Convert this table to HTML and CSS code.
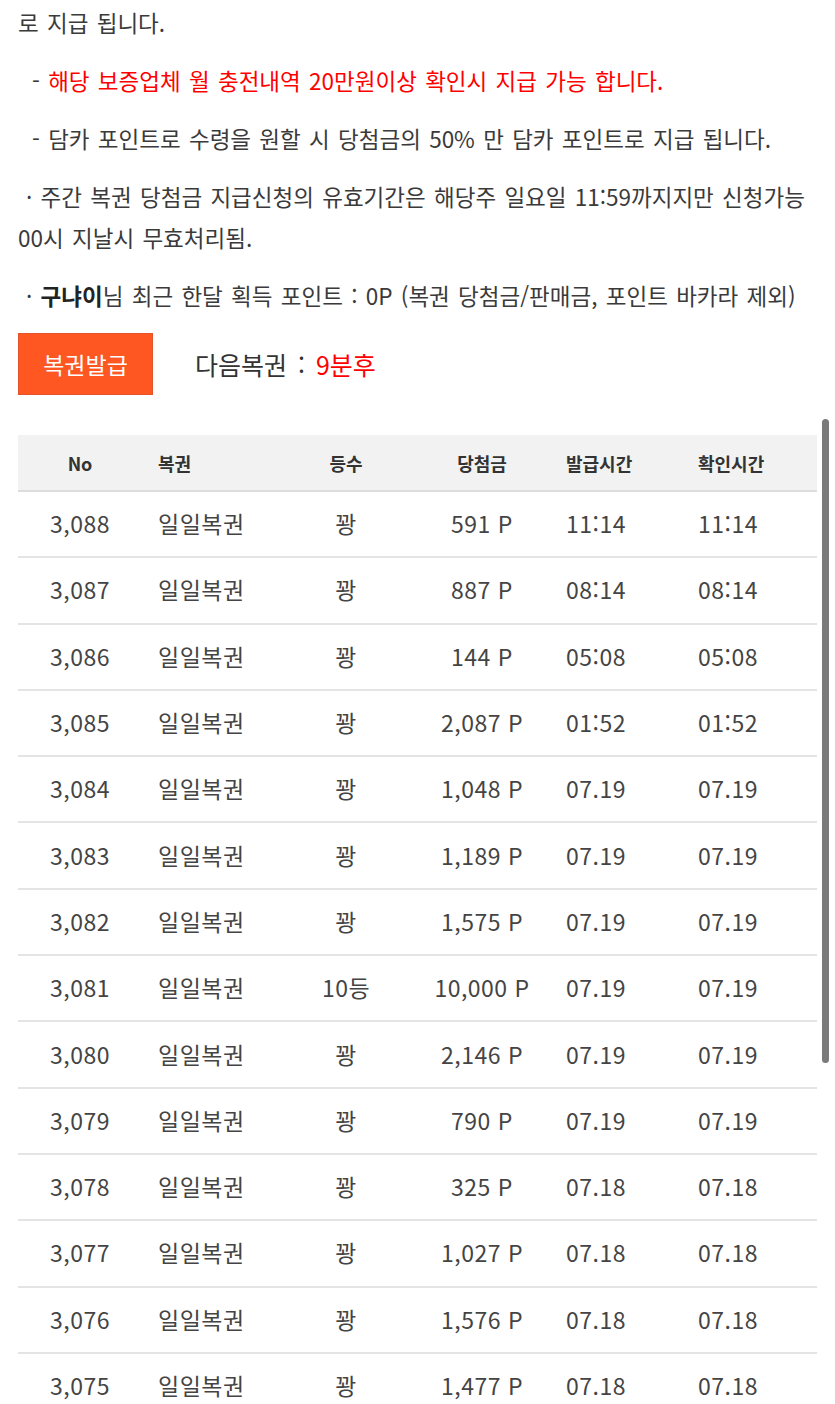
FILE: index.html
```html
<!DOCTYPE html>
<html lang="ko">
<head>
<meta charset="utf-8">
<title>복권</title>
<link rel="stylesheet" href="styles.css">
</head>
<body>
<div class="page">
  <p class="para">로 지급 됩니다.</p>
  <p class="para indent-dash"><span class="dash">-</span> <span class="red">해당 보증업체 월 충전내역 20만원이상 확인시 지급 가능 합니다.</span></p>
  <p class="para indent-dash"><span class="dash">-</span> 담카 포인트로 수령을 원할 시 당첨금의 50% 만 담카 포인트로 지급 됩니다.</p>
  <p class="para"><span class="dot">·</span> 주간 복권 당첨금 지급신청의 유효기간은 해당주 일요일 11:59까지지만 신청가능<br>00시 지날시 무효처리됨.</p>
  <p class="para"><span class="dot">·</span> <b>구냐이</b>님 최근 한달 획득 포인트 : 0P (복권 당첨금/판매금, 포인트 바카라 제외)</p>

  <div class="action-row">
    <button class="issue-btn" type="button">복권발급</button>
    <div class="next">다음복권 : <span class="red">9분후</span></div>
  </div>

  <table class="lotto">
    <colgroup>
      <col class="c-no"><col class="c-name"><col class="c-rank"><col class="c-prize"><col class="c-issue"><col class="c-check">
    </colgroup>
    <thead>
      <tr><th class="center">No</th><th class="left">복권</th><th class="center">등수</th><th class="center">당첨금</th><th class="left">발급시간</th><th class="left">확인시간</th></tr>
    </thead>
    <tbody>
      <tr><td class="center">3,088</td><td class="left">일일복권</td><td class="center">꽝</td><td class="center">591 P</td><td class="left">11:14</td><td class="left">11:14</td></tr>
      <tr><td class="center">3,087</td><td class="left">일일복권</td><td class="center">꽝</td><td class="center">887 P</td><td class="left">08:14</td><td class="left">08:14</td></tr>
      <tr><td class="center">3,086</td><td class="left">일일복권</td><td class="center">꽝</td><td class="center">144 P</td><td class="left">05:08</td><td class="left">05:08</td></tr>
      <tr><td class="center">3,085</td><td class="left">일일복권</td><td class="center">꽝</td><td class="center">2,087 P</td><td class="left">01:52</td><td class="left">01:52</td></tr>
      <tr><td class="center">3,084</td><td class="left">일일복권</td><td class="center">꽝</td><td class="center">1,048 P</td><td class="left">07.19</td><td class="left">07.19</td></tr>
      <tr><td class="center">3,083</td><td class="left">일일복권</td><td class="center">꽝</td><td class="center">1,189 P</td><td class="left">07.19</td><td class="left">07.19</td></tr>
      <tr><td class="center">3,082</td><td class="left">일일복권</td><td class="center">꽝</td><td class="center">1,575 P</td><td class="left">07.19</td><td class="left">07.19</td></tr>
      <tr><td class="center">3,081</td><td class="left">일일복권</td><td class="center">10등</td><td class="center">10,000 P</td><td class="left">07.19</td><td class="left">07.19</td></tr>
      <tr><td class="center">3,080</td><td class="left">일일복권</td><td class="center">꽝</td><td class="center">2,146 P</td><td class="left">07.19</td><td class="left">07.19</td></tr>
      <tr><td class="center">3,079</td><td class="left">일일복권</td><td class="center">꽝</td><td class="center">790 P</td><td class="left">07.19</td><td class="left">07.19</td></tr>
      <tr><td class="center">3,078</td><td class="left">일일복권</td><td class="center">꽝</td><td class="center">325 P</td><td class="left">07.18</td><td class="left">07.18</td></tr>
      <tr><td class="center">3,077</td><td class="left">일일복권</td><td class="center">꽝</td><td class="center">1,027 P</td><td class="left">07.18</td><td class="left">07.18</td></tr>
      <tr><td class="center">3,076</td><td class="left">일일복권</td><td class="center">꽝</td><td class="center">1,576 P</td><td class="left">07.18</td><td class="left">07.18</td></tr>
      <tr><td class="center">3,075</td><td class="left">일일복권</td><td class="center">꽝</td><td class="center">1,477 P</td><td class="left">07.18</td><td class="left">07.18</td></tr>
    </tbody>
  </table>
</div>
<div class="scroll-thumb"></div>
</body>
</html>
```

FILE: styles.css
```css
html, body {
  margin: 0;
  padding: 0;
  background: #ffffff;
}
body {
  font-family: "Noto Sans CJK KR", "Noto Sans", sans-serif;
  color: #3a3a3a;
  overflow: hidden;
  height: 1404px;
}
.page {
  padding: 2px 18px 0 18px;
}
.para {
  margin: 0 0 17px 0;
  font-size: 22.5px;
  line-height: 41px;
  word-spacing: 2px;
  white-space: nowrap;
}
.indent-dash {
  padding-left: 14px;
}
.dash {
  color: #3a3a3a;
}
.dot {
  padding-left: 8px;
}
.para b {
  font-weight: 700;
  color: #222;
}
.red {
  color: #ff0000;
}
.action-row {
  display: flex;
  align-items: center;
  gap: 42px;
  margin-top: 17px;
}
.issue-btn {
  width: 135px;
  height: 62px;
  background: #ff5722;
  border: 1px solid #e4532a;
  color: #ffffff;
  font-family: "Noto Sans CJK KR", sans-serif;
  font-size: 23px;
  padding: 0;
  cursor: pointer;
}
.next {
  font-size: 25px;
  color: #333;
  word-spacing: 4px;
}
.lotto {
  margin-top: 40px;
  width: 799px;
  border-collapse: collapse;
  table-layout: fixed;
}
.c-no { width: 124px; }
.c-name { width: 138px; }
.c-rank { width: 132px; }
.c-prize { width: 140px; }
.c-issue { width: 132px; }
.c-check { width: 133px; }
.lotto th {
  background: #f2f2f2;
  height: 55px;
  font-size: 18px;
  font-weight: 700;
  color: #333;
  border-bottom: 2px solid #dddddd;
  padding: 0;
}
.lotto td {
  height: 62.3px;
  font-size: 23px;
  line-height: 30px;
  letter-spacing: 0.5px;
  color: #444;
  border-bottom: 2px solid #e4e4e4;
  padding: 0 0 2px 0;
}
.lotto .center { text-align: center; }
.lotto .left { text-align: left; padding-left: 14px; }
.lotto td.left:nth-child(2), .lotto th.left:nth-child(2) { padding-left: 16px; }
.scroll-thumb {
  position: absolute;
  left: 822px;
  top: 419px;
  width: 7px;
  height: 644px;
  border-radius: 4px;
  background: #7a7a7a;
}
```
